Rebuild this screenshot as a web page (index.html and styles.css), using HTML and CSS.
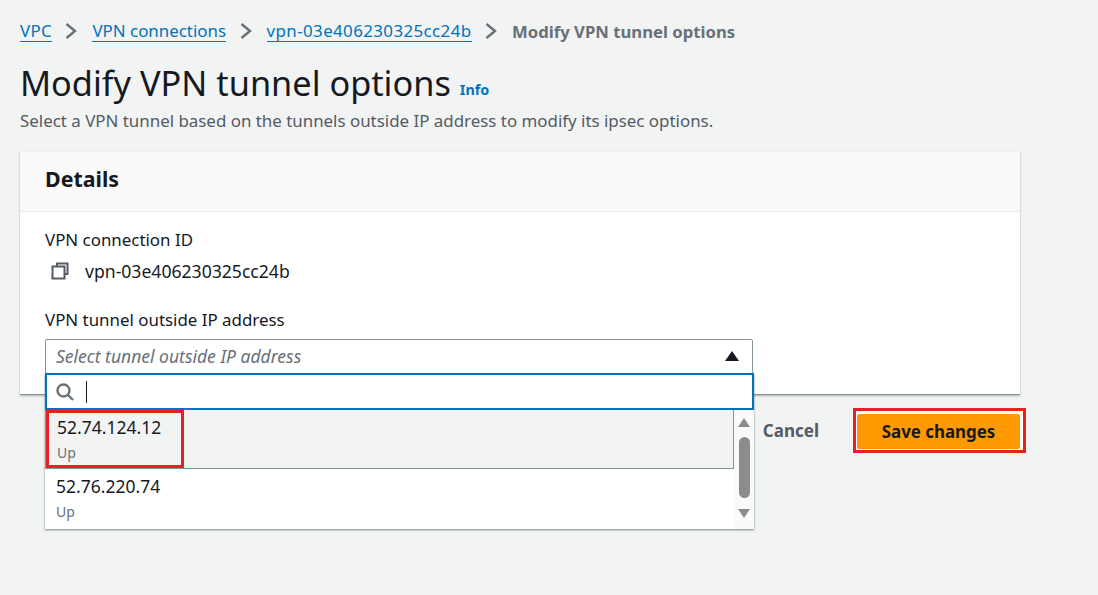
FILE: index.html
```html
<!DOCTYPE html>
<html lang="en">

<head>
    <meta charset="UTF-8">
    <meta name="viewport" content="width=device-width, initial-scale=1.0">
    <title>Modify VPN tunnel options</title>
    <link rel="stylesheet" href="styles.css">
</head>

<body>
    <nav class="crumbs">
        <a class="root-link" href="#">VPC</a>
        <svg class="sep" viewBox="0 0 12 16"><path d="M1.5 1l8.5 7-8.5 7" /></svg>
        <a href="#">VPN connections</a>
        <svg class="sep" viewBox="0 0 12 16"><path d="M1.5 1l8.5 7-8.5 7" /></svg>
        <a class="id-link" href="#">vpn-03e406230325cc24b</a>
        <svg class="sep" viewBox="0 0 12 16"><path d="M1.5 1l8.5 7-8.5 7" /></svg>
        <span class="current">Modify VPN tunnel options</span>
    </nav>

    <div class="title">
        <h1>Modify VPN tunnel options</h1>
        <a class="info" href="#">Info</a>
    </div>
    <p class="lead">Select a VPN tunnel based on the tunnels outside IP address to modify its ipsec options.</p>

    <section class="card">
        <h2>Details</h2>
        <div class="card-body">
            <div class="label">VPN connection ID</div>
            <div class="copy">
                <svg class="copy-icon" viewBox="0 0 18 18">
                    <path d="M6 4.5V1.5h10.5v10.5H13.5" />
                    <rect x="1.5" y="4.5" width="12" height="12" />
                </svg>
                <span>vpn-03e406230325cc24b</span>
            </div>
            <div class="label">VPN tunnel outside IP address</div>

            <div class="select">
                <div class="trigger">
                    <span>Select tunnel outside IP address</span>
                    <svg class="caret" viewBox="0 0 14 10"><path d="M7 0l7 10H0z" /></svg>
                </div>
                <div class="dropdown">
                    <div class="search">
                        <svg class="search-icon" viewBox="0 0 18 18">
                            <circle cx="7.5" cy="7.5" r="6" />
                            <path d="M12 12l5 5" />
                        </svg>
                        <span class="cursor"></span>
                    </div>
                    <div class="list">
                        <div class="options">
                            <div class="option hover">
                                <div class="ip">52.74.124.12</div>
                                <div class="state">Up</div>
                                <div class="mark"></div>
                            </div>
                            <div class="option">
                                <div class="ip">52.76.220.74</div>
                                <div class="state">Up</div>
                            </div>
                        </div>
                        <div class="scroll">
                            <span class="arrow up"></span>
                            <span class="thumb"></span>
                            <span class="arrow down"></span>
                        </div>
                    </div>
                </div>
            </div>
        </div>
    </section>

    <div class="actions">
        <a class="cancel" href="#">Cancel</a>
        <div class="save-mark"><button>Save changes</button></div>
    </div>
</body>

</html>
```

FILE: styles.css
```css
* {
    box-sizing: border-box;
}

body {
    margin: 0;
    padding: 20px 78px 0 20px;
    height: 595px;
    overflow: hidden;
    background: #f2f3f3;
    color: #16191f;
    font-family: "Noto Sans", sans-serif;
    font-size: 16.9px;
}

a {
    color: #0073bb;
}

.crumbs {
    display: flex;
    align-items: center;
    height: 22px;
    font-size: 16.9px;
}

.crumbs a {
    text-decoration: none;
    border-bottom: 1px solid #0073bb;
    line-height: 21px;
}

.crumbs .root-link {
    letter-spacing: .3px;
}

.crumbs .id-link {
    letter-spacing: .4px;
}

.sep {
    width: 12px;
    height: 16px;
    margin: 0 15px 0 13.5px;
    fill: none;
    stroke: #687078;
    stroke-width: 2.4;
}

.current {
    color: #687078;
    font-weight: 700;
    font-size: 16.7px;
}

.title {
    display: flex;
    align-items: flex-end;
    margin-top: 17px;
}

h1 {
    margin: 0;
    font-size: 34.3px;
    font-weight: 400;
    line-height: 48px;
}

.info {
    margin: 0 0 8px 9px;
    font-size: 14.3px;
    font-weight: 700;
    text-decoration: none;
}

.lead {
    margin: 3px 0 0;
    color: #545b64;
    line-height: 22px;
}

.card {
    margin-top: 20px;
    height: 243px;
    background: #fff;
    border-bottom: 1px solid #879596;
    box-shadow: 0 1px 2px rgba(0, 28, 36, .3);
}

h2 {
    margin: 0;
    height: 60px;
    padding: 0 25px;
    background: #fafafa;
    border-bottom: 1px solid #eaeded;
    font-size: 21.4px;
    font-weight: 700;
    line-height: 54px;
}

.card-body {
    padding: 17px 25px 0;
}

.label {
    line-height: 22px;
}

.copy {
    display: flex;
    align-items: center;
    height: 22px;
    margin: 9px 0 27px 6px;
    font-size: 17.6px;
}

.copy-icon {
    width: 18px;
    height: 18px;
    margin-right: 16px;
    fill: #fff;
    stroke: #545b64;
    stroke-width: 2;
}

.select {
    position: relative;
    width: 708px;
    margin-top: 8px;
}

.trigger {
    display: flex;
    align-items: center;
    justify-content: space-between;
    height: 35px;
    padding: 0 13px 2px 10px;
    background: #fff;
    border: 1px solid #879596;
    border-radius: 2px;
    color: #687078;
    font-size: 17.5px;
    font-style: italic;
}

.caret {
    width: 14px;
    height: 10px;
    fill: #16191f;
}

.dropdown {
    position: absolute;
    top: 34px;
    left: 0;
    width: 709px;
    background: #fff;
    box-shadow: 0 1px 2px rgba(0, 28, 36, .5);
}

.search {
    display: flex;
    align-items: center;
    height: 37px;
    padding-left: 9px;
    border: 2px solid #0073bb;
}

.search-icon {
    width: 18px;
    height: 18px;
    fill: none;
    stroke: #687078;
    stroke-width: 2.4;
}

.cursor {
    width: 1px;
    height: 22px;
    margin-left: 12px;
    background: #16191f;
}

.list {
    display: flex;
    height: 119px;
}

.options {
    flex: 1;
}

.option {
    position: relative;
    height: 59px;
    padding: 6px 11px;
}

.option.hover {
    background: #f2f3f3;
    border: 1px solid #879596;
    border-top: 0;
    padding-left: 11px;
}

.ip {
    font-size: 17.5px;
    line-height: 23px;
}

.state {
    margin-top: 4px;
    color: #687078;
    font-size: 14px;
    line-height: 19px;
}

.mark {
    position: absolute;
    top: 0;
    left: 0;
    width: 138px;
    height: 58px;
    border: 3.5px solid #e81f27;
}

.scroll {
    display: flex;
    flex-direction: column;
    align-items: center;
    width: 20px;
    padding-top: 8px;
    background: #fafafa;
}

.thumb {
    width: 11px;
    height: 61px;
    margin: 10px 0 11px;
    background: #8c8c8c;
    border-radius: 6px;
}

.arrow {
    width: 0;
    height: 0;
    border-left: 6.5px solid transparent;
    border-right: 6.5px solid transparent;
}

.arrow.up {
    border-bottom: 9px solid #8c8c8c;
}

.arrow.down {
    border-top: 9px solid #8c8c8c;
}

.actions {
    display: flex;
    align-items: center;
    justify-content: flex-end;
    margin-top: 13px;
    margin-right: -6px;
}

.cancel {
    margin-right: 34px;
    color: #545b64;
    font-size: 17px;
    font-weight: 700;
    text-decoration: none;
}

.save-mark {
    width: 173px;
    height: 45px;
    padding: 3px 3px 0 0;
    background: #fff;
    border: 3px solid #e81f27;
}

.save-mark button {
    display: block;
    width: 163px;
    height: 35px;
    margin-left: 1px;
    border: 0;
    border-radius: 2px;
    background: #ff9900;
    color: #16191f;
    font-family: inherit;
    font-size: 16.9px;
    font-weight: 700;
}
```
